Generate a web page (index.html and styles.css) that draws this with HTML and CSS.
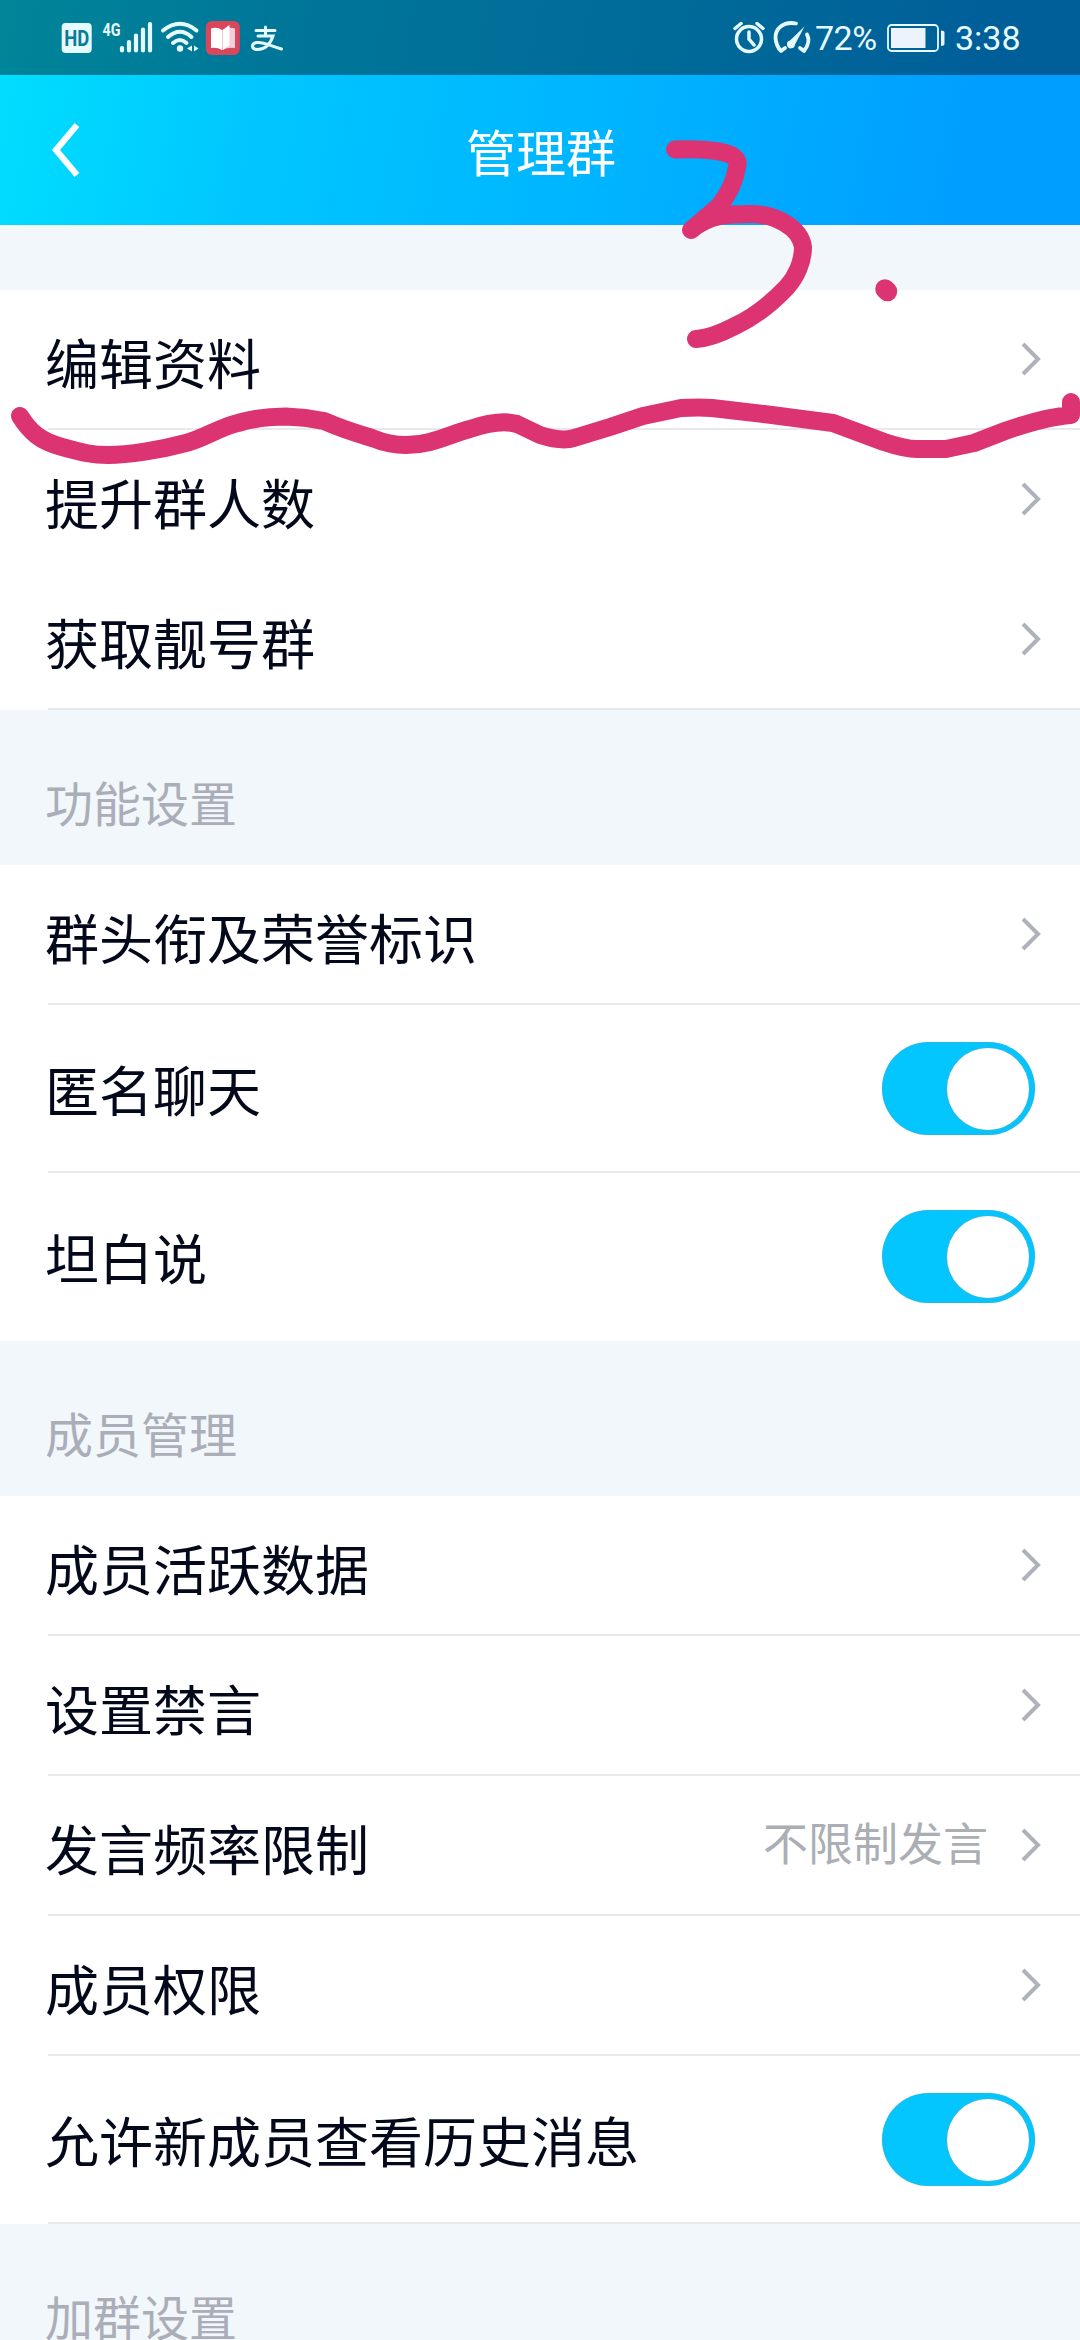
FILE: index.html
```html
<!DOCTYPE html>
<html lang="zh-CN">
<head>
<meta charset="utf-8">
<title>管理群</title>
<link rel="stylesheet" href="styles.css">
</head>
<body>
<svg class="defs" aria-hidden="true">
  <symbol id="chevron" viewBox="0 0 20 34"><path d="M2 2 L17 17 L2 32"/></symbol>
</svg>
<div class="screen">
  <div class="top">
    <div class="status">
      <svg class="status-left" viewBox="0 0 180 36">
        <rect x="1.7" y="3" width="30" height="30" rx="4" fill="#e6fbff"/>
        <text class="hd" x="16.8" y="25.500" textLength="25" lengthAdjust="spacingAndGlyphs">HD</text>
        <text class="net" x="42.5" y="16" textLength="18" lengthAdjust="spacingAndGlyphs">4G</text>
        <path class="bars" d="M62 28v2.4M69 22v8.4M76 15.500v15M83 9.500v21M90 4v26.400"/>
        <g class="wifi">
          <path d="M103 10.500Q120 -3 136.500 10.500M108 17Q120 6.500 131.500 17M113 23Q120 17 126.500 23"/>
        </g>
        <circle cx="120" cy="28.500" r="3.200" fill="#e6fbff"/>
        <path d="M132 25.500v6l-5-3zM134 25.500v6l4.500-3z" fill="#e6fbff"/>
        <rect x="145.800" y="1" width="34" height="34" rx="6" fill="#d9475d"/>
        <path d="M151 8.500q6-2 11 1.500v20q-5-3-11-2z" fill="#fff"/>
        <path d="M162.500 10q6-3.500 12.500-1.500v19.500q-7-1-12.500 2z" fill="#f6cfd6"/>
        <path d="M162.500 10l7-5v20l-7 5z" fill="#fff"/>
      </svg>
      <svg class="pay" viewBox="0 0 34 34">
        <path d="M15.500 6v9M6 9.500h19M8 15h15C20 24 14 28.500 7.500 28.500 1 28.500 1 22.500 6.500 21.500c7-1 14 3.500 25 6.500"/>
      </svg>
      <svg class="alarm" viewBox="0 0 34 34">
        <circle cx="17" cy="18" r="12.500"/>
        <path d="M17 11v7l5 6M3 7.500l6-5M31 7.500l-6-5"/>
      </svg>
      <svg class="gauge" viewBox="0 0 40 36">
        <path d="M23 3.500C10 1 2 9 2.500 18C3 24 5 28 8 31L12 28M34 14.500C37 20 35 26 31 31L27 28"/>
        <path class="needle" d="M31.500 6.500L22 24.500a4 4 0 1 1-5-4z"/>
      </svg>
      <span class="percent">72%</span>
      <svg class="battery" viewBox="0 0 58 28">
        <rect x="1" y="1" width="50" height="26" rx="3.500"/>
        <path class="level" d="M4 4h34.500v20H4zM54 6.500q3.500 0 3.500 2v11q0 2.500-3.500 2.500z"/>
      </svg>
      <span class="time">3:38</span>
    </div>
    <div class="nav">
      <svg class="back" viewBox="0 0 32 56"><path d="M27 3L6 28l21 25"/></svg>
      <h1 class="title">管理群</h1>
    </div>
  </div>

  <div class="group first">
    <div class="row"><div class="cell"><span class="label">编辑资料</span><svg class="arrow"><use href="#chevron"/></svg></div></div>
    <div class="row plain"><div class="cell"><span class="label">提升群人数</span><svg class="arrow"><use href="#chevron"/></svg></div></div>
    <div class="row"><div class="cell"><span class="label">获取靓号群</span><svg class="arrow"><use href="#chevron"/></svg></div></div>
  </div>

  <h2 class="section">功能设置</h2>
  <div class="group">
    <div class="row"><div class="cell"><span class="label">群头衔及荣誉标识</span><svg class="arrow"><use href="#chevron"/></svg></div></div>
    <div class="row tall"><div class="cell"><span class="label">匿名聊天</span><span class="switch"><span class="knob"></span></span></div></div>
    <div class="row tall plain"><div class="cell"><span class="label">坦白说</span><span class="switch"><span class="knob"></span></span></div></div>
  </div>

  <h2 class="section">成员管理</h2>
  <div class="group">
    <div class="row"><div class="cell"><span class="label">成员活跃数据</span><svg class="arrow"><use href="#chevron"/></svg></div></div>
    <div class="row"><div class="cell"><span class="label">设置禁言</span><svg class="arrow"><use href="#chevron"/></svg></div></div>
    <div class="row"><div class="cell"><span class="label">发言频率限制</span><span class="value">不限制发言</span><svg class="arrow"><use href="#chevron"/></svg></div></div>
    <div class="row"><div class="cell"><span class="label">成员权限</span><svg class="arrow"><use href="#chevron"/></svg></div></div>
    <div class="row tall"><div class="cell"><span class="label">允许新成员查看历史消息</span><span class="switch"><span class="knob"></span></span></div></div>
  </div>

  <h2 class="section">加群设置</h2>

  <svg class="marks" viewBox="0 0 1080 480">
    <path d="M675 149.500Q715 148 731 155Q740 160 737 167C735 182 727 196 719 206L691 230C710 214 730 214 750 214C775 214 800 227 803 247C803 262 796 277 787 287C770 305 752 318 735 326Q712 338 696 339"/>
    <path class="dot" d="M885 289L887.500 291.500"/>
    <path d="M20 416C30 432 40 441 62 447S92 455 108 455C128 455 160 450 186 443C205 438 220 427 238 423C255 418 270 416.500 286 416.500Q305 417 324 421C340 428 355 433 372 438Q389 445 406 445C432 445 450 434 470 429Q500 419 517 424L540 435Q562 442 574 438L610 427L643 416L681 408Q700 407 712 408L764 414L833 423L884 442Q905 449 917 449H946L974 443L1005 431Q1045 417 1071 415V402"/>
  </svg>
</div>
</body>
</html>
```
FILE: styles.css
```css
* { box-sizing: border-box; }
body {
  margin: 0;
  background: #f2f7fb;
  color: #03081a;
  font-family: "Noto Sans CJK SC", "Noto Sans", sans-serif;
}
h1, h2 { margin: 0; font-weight: 400; }
.defs { position: absolute; width: 0; height: 0; }
.screen {
  position: relative;
  width: 1080px;
  height: 2340px;
  overflow: hidden;
}
.top { background: linear-gradient(100deg, #00dfff 0%, #00c6ff 25%, #00b2ff 60%, #009fff 88%); }
.status {
  display: flex;
  align-items: center;
  height: 75px;
  padding: 1px 62px 0 60px;
  background: rgba(0, 0, 0, .4);
  color: #e6fbff;
  font-family: Roboto, sans-serif;
  font-size: 34px;
}
.status svg { flex: none; overflow: visible; fill: none; stroke: #e6fbff; stroke-linecap: round; }
.status-left { width: 180px; height: 36px; }
.status-left > rect, .status-left > circle, .status-left > path, .status-left text { stroke: none; }
.status-left .bars { stroke: #e6fbff; stroke-width: 4.200; }
.status-left .wifi { stroke: #e6fbff; stroke-width: 4; }
.hd { fill: #087c98; font: 700 22px Roboto, sans-serif; text-anchor: middle; }
.net { fill: #e6fbff; font: 700 19px Roboto, sans-serif; }
.pay { width: 34px; height: 34px; margin-left: 10px; margin-right: 448px; stroke-width: 3; }
.alarm { width: 34px; height: 34px; stroke-width: 3.500; }
.gauge { width: 40px; height: 36px; margin-left: 7px; stroke-width: 3.800; stroke-linejoin: round; }
.needle { fill: #e6fbff; stroke: none; }
.percent { width: 61px; margin-left: 2px; letter-spacing: -.5px; white-space: nowrap; }
.battery { width: 58px; height: 28px; margin-left: 11px; stroke-width: 1.800; }
.level { fill: #edf3fa; stroke: none; }
.time { margin-left: 10px; white-space: nowrap; }
.nav {
  display: grid;
  grid-template-columns: 100px 1fr 98px;
  align-items: center;
  height: 150px;
}
.back {
  width: 32px;
  height: 56px;
  margin-left: 50px;
  fill: none;
  stroke: #fff;
  stroke-width: 6.200;
}
.title { color: #fff; font-size: 50px; line-height: 72px; text-align: center; }
.group { background: #fff; }
.first { margin-top: 65px; }
.row { height: 140px; padding-left: 48px; }
.tall { height: 168px; }
.cell {
  display: flex;
  align-items: center;
  height: 100%;
  padding-right: 39px;
  border-bottom: 2px solid #e7e9ec;
}
.plain .cell { border-color: transparent; }
.label { flex: 1; margin-left: -3px; padding-top: 6px; font-size: 54px; line-height: 80px; }
.tall .label { padding-top: 2px; }
.value { margin-right: 33px; color: #abaeb5; font-size: 45px; line-height: 66px; margin-top: -6px; }
.arrow { width: 20px; height: 34px; fill: none; stroke: #afb2ba; stroke-width: 4; }
.switch {
  display: flex;
  justify-content: flex-end;
  width: 153px;
  height: 93px;
  margin-right: 6px;
  padding: 6px;
  border-radius: 47px;
  background: #04c6ff;
  box-shadow: inset 0 0 3px #39aed0;
}
.knob {
  width: 82px;
  height: 82px;
  border-radius: 50%;
  background: #fff;
  box-shadow: 0 0 3px #55aac6;
}
.section {
  height: 155px;
  padding: 57px 45px 0;
  color: #abaeb8;
  font-size: 48px;
  line-height: 68px;
}
.marks {
  position: absolute;
  top: 0;
  left: 0;
  width: 1080px;
  height: 480px;
  fill: none;
  stroke: #dc3373;
  stroke-width: 18;
  stroke-linecap: round;
  stroke-linejoin: round;
}
.dot { stroke-width: 19.500; }
```
